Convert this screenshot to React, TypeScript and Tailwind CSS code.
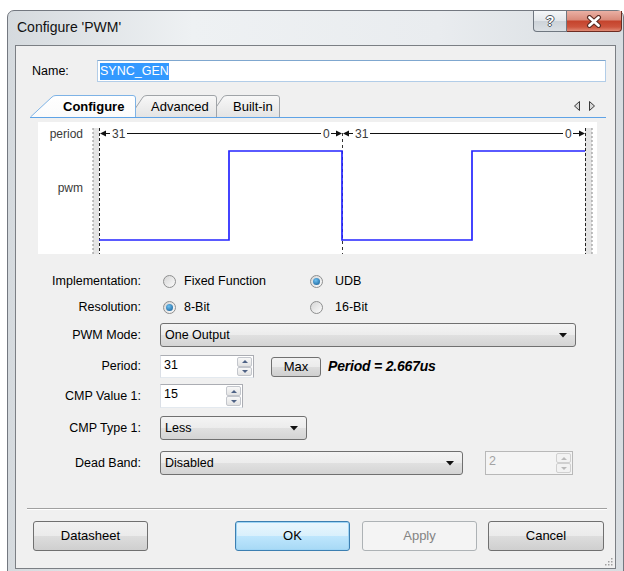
import React from "react";

// ---- small drawn glyphs ----

function DropArrow() {
  return (
    <svg width="8" height="5" viewBox="0 0 8 5">
      <polygon points="0,0 8,0 4,4.5" fill="#111" />
    </svg>
  );
}

function SpinHalf({ up, disabled }: { up?: boolean; disabled?: boolean }) {
  return (
    <div
      className={`flex-1 flex items-center justify-center rounded-[2px] border ${
        disabled
          ? "border-[#d0d0d0] bg-[#f2f2f2]"
          : "border-[#c3c6cc] bg-[linear-gradient(180deg,#f8f8f8,#e3e3e3)]"
      }`}
    >
      <svg width="6" height="3" viewBox="0 0 6 3">
        <polygon
          points={up ? "0,3 3,0 6,3" : "0,0 6,0 3,3"}
          fill={disabled ? "#b9b9b9" : "#4e6285"}
        />
      </svg>
    </div>
  );
}

// ---- controls ----

function SpinBox({
  value,
  className,
  disabled,
}: {
  value: string;
  className: string;
  disabled?: boolean;
}) {
  return (
    <div
      className={`flex items-stretch border ${
        disabled
          ? "border-[#b8b8b8] bg-[#f4f4f4] text-[#a3a3a3]"
          : "border-[#abadb3] border-l-[#dbdfe6] border-b-[#e3e9ef] bg-white"
      } ${className}`}
    >
      <span className="flex-1 pl-[3px] pt-[1px] leading-[16px]">{value}</span>
      <div className="w-[17px] flex flex-col p-[1px]">
        <SpinHalf up disabled={disabled} />
        <SpinHalf disabled={disabled} />
      </div>
    </div>
  );
}

function Combo({ value, className }: { value: string; className: string }) {
  return (
    <div
      className={`flex items-center justify-between h-full pl-[4px] pr-[8px] rounded-[3px] border border-[#707070] bg-[linear-gradient(180deg,#f4f4f4_0%,#ececec_50%,#e0e0e0_51%,#d4d4d4_100%)] ${className}`}
    >
      <span>{value}</span>
      <DropArrow />
    </div>
  );
}

function Radio({
  label,
  checked,
  gap,
}: {
  label: string;
  checked?: boolean;
  gap: string;
}) {
  return (
    <div className="flex items-center">
      <span className="w-[13px] h-[13px] rounded-full border border-[#8e8f8f] bg-[linear-gradient(135deg,#d6d6d6,#fbfbfb)] flex items-center justify-center">
        {checked && (
          <span className="w-[7px] h-[7px] rounded-full bg-[radial-gradient(circle_at_40%_35%,#6cc0f2,#13588f)]" />
        )}
      </span>
      <span className={gap}>{label}</span>
    </div>
  );
}

function WinButton({
  label,
  kind,
  className,
}: {
  label: string;
  kind?: "default" | "disabled";
  className: string;
}) {
  const look =
    kind === "default"
      ? "border-[#3c7fb1] bg-[linear-gradient(180deg,#eaf6fd_0%,#d9f0fc_50%,#bee6fd_51%,#a7d9f5_100%)] shadow-[inset_0_0_0_1px_#9fd5f5]"
      : kind === "disabled"
      ? "border-[#adb2b5] bg-[#f4f4f4] text-[#838383]"
      : "border-[#707070] bg-[linear-gradient(180deg,#f2f2f2_0%,#ebebeb_50%,#dddddd_51%,#cfcfcf_100%)]";
  return (
    <div
      className={`h-full flex items-center justify-center rounded-[3px] border text-[13px] ${look} ${className}`}
    >
      {label}
    </div>
  );
}

function FieldRow({
  label,
  className,
  children,
}: {
  label: string;
  className: string;
  children: React.ReactNode;
}) {
  return (
    <div className={`flex items-center ${className}`}>
      <span className="w-[125px] shrink-0 text-right">{label}</span>
      {children}
    </div>
  );
}

// ---- tabs ----

function tabPath(w: number, slant: number) {
  return `M0.5,22 L${slant},2 Q${slant + 1.5},0.5 ${slant + 4},0.5 H${w - 3} Q${w - 0.5},0.5 ${w - 0.5},3 V22`;
}

function Tab({
  label,
  width,
  active,
  className,
  pad,
}: {
  label: string;
  width: number;
  active?: boolean;
  className: string;
  pad: string;
}) {
  const id = `tab-${label}`;
  return (
    <div className={`relative h-[22px] shrink-0 ${className}`}>
      <svg className="absolute inset-0" width={width} height="23" viewBox={`0 0 ${width} 23`}>
        <defs>
          <linearGradient id={id} x1="0" y1="0" x2="0" y2="1">
            <stop offset="0" stopColor={active ? "#ffffff" : "#f8f8f8"} />
            <stop offset="1" stopColor={active ? "#fbfbfb" : "#e4e4e4"} />
          </linearGradient>
        </defs>
        <path
          d={tabPath(width, active ? 22 : 14)}
          fill={`url(#${id})`}
          stroke={active ? "#7eb3e6" : "#a0a4a8"}
          strokeWidth="1"
        />
      </svg>
      <span
        className={`relative flex items-center h-full pt-[2px] text-[13px] ${pad} ${
          active ? "font-bold" : ""
        }`}
      >
        {label}
      </span>
    </div>
  );
}

// ---- timing diagram ----

function Waveform() {
  const txt = { fontSize: 12, fill: "#3a3a3a" };
  return (
    <svg width="559" height="132" viewBox="0 0 559 132" className="block">
      <text x="45" y="16" textAnchor="end" style={txt}>period</text>
      <text x="45" y="70" textAnchor="end" style={txt}>pwm</text>

      {/* start / end markers */}
      <rect x="55" y="6" width="6" height="126" fill="#e4e4e4" />
      <line x1="55" y1="6" x2="55" y2="132" stroke="#8a8a8a" strokeDasharray="2 2" />
      <line x1="61.5" y1="6" x2="61.5" y2="132" stroke="#222" strokeDasharray="3 2" />
      <rect x="547" y="6" width="7" height="126" fill="#e4e4e4" />
      <line x1="547.5" y1="6" x2="547.5" y2="132" stroke="#222" strokeDasharray="3 2" />
      <line x1="554" y1="6" x2="554" y2="132" stroke="#8a8a8a" strokeDasharray="2 2" />
      <line x1="304.5" y1="11" x2="304.5" y2="132" stroke="#333" strokeDasharray="3 3" />

      {/* period counter, first cycle */}
      <polygon points="62,11.5 68,8.5 68,14.5" fill="#111" />
      <line x1="68" y1="11.5" x2="72" y2="11.5" stroke="#111" />
      <text x="74" y="16" style={txt}>31</text>
      <line x1="89" y1="11.5" x2="283" y2="11.5" stroke="#111" />
      <text x="285" y="16" style={txt}>0</text>
      <line x1="293" y1="11.5" x2="298" y2="11.5" stroke="#111" />
      <polygon points="304,11.5 298,8.5 298,14.5" fill="#111" />

      {/* second cycle */}
      <polygon points="305,11.5 311,8.5 311,14.5" fill="#111" />
      <line x1="311" y1="11.5" x2="315" y2="11.5" stroke="#111" />
      <text x="317" y="16" style={txt}>31</text>
      <line x1="332" y1="11.5" x2="525" y2="11.5" stroke="#111" />
      <text x="527" y="16" style={txt}>0</text>
      <line x1="535" y1="11.5" x2="541" y2="11.5" stroke="#111" />
      <polygon points="547,11.5 541,8.5 541,14.5" fill="#111" />

      <path
        d="M61,118 H191 V29 H304 V118 H434 V29 H547"
        fill="none"
        stroke="#2525ff"
        strokeWidth="1.7"
      />
    </svg>
  );
}

// ---- dialog ----

export default function App() {
  return (
    <div className="w-[624px] h-[571px] overflow-hidden bg-white font-['Liberation_Sans',Arial,sans-serif] text-[12.5px] text-black">
      <div className="mt-[10px] ml-[7px] w-[617px] h-[563px] flex flex-col rounded-t-[7px] border border-[#737880] bg-[linear-gradient(90deg,#d5dade,#eef1f3_30%,#e9ecef_70%,#d8dde1)]">
        {/* caption */}
        <div className="h-[34px] flex justify-between shrink-0">
          <span className="ml-[9px] mt-[8px] text-[14px] leading-[16px] text-[#111]">
            Configure 'PWM'
          </span>
          <div className="flex h-[21px] mr-[1px]">
            <div className="w-[34px] flex items-center justify-center rounded-bl-[4px] border border-t-0 border-[#6f7780] bg-[linear-gradient(180deg,#f5f7f9,#e2e6ea_50%,#cdd3d9_51%,#dbe0e4)]">
              <span className="text-[14px] font-bold leading-none text-white [text-shadow:-1px_0_#505860,1px_0_#505860,0_-1px_#505860,0_1px_#505860]">
                ?
              </span>
            </div>
            <div className="w-[55px] flex items-center justify-center rounded-br-[4px] border border-l-0 border-t-0 border-[#6d2c22] bg-[linear-gradient(180deg,#eab0a4,#d98a7a_45%,#c4432c_50%,#cd553e_80%,#e08a74)]">
              <svg width="16" height="13" viewBox="0 0 16 13">
                <path d="M3.5,2.5 L12.5,10.5 M12.5,2.5 L3.5,10.5" stroke="#5a2a22" strokeWidth="5" strokeLinecap="round" />
                <path d="M3.5,2.5 L12.5,10.5 M12.5,2.5 L3.5,10.5" stroke="#fff" strokeWidth="2.8" strokeLinecap="round" />
              </svg>
            </div>
          </div>
        </div>

        {/* client area */}
        <div className="relative ml-[7px] w-[601px] h-[524px] shrink-0 border border-[#7b7f84] bg-[#f0f0f0]">
          <div className="flex items-center h-[22px] mt-[14px]">
            <span className="w-[81px] pl-[16px]">Name:</span>
            <div className="w-[509px] h-full flex items-center pl-[2px] border border-[#b2cde8] border-t-[#7fa7cf] bg-white">
              <span className="bg-[#3399ff] text-white leading-[17px]">SYNC_GEN</span>
            </div>
          </div>

          {/* tab strip */}
          <div className="relative mt-[13px] ml-[14px] w-[576px] h-[23px] flex items-start border-b border-[#5fa3e6]">
            <Tab label="Configure" width={106} active className="w-[106px] z-30" pad="pl-[33px]" />
            <Tab label="Advanced" width={88} className="w-[88px] -ml-[7px] z-20" pad="pl-[22px]" />
            <Tab label="Built-in" width={71} className="w-[71px] -ml-[8px] z-10" pad="pl-[24px]" />
            <div className="flex-1" />
            <div className="flex items-center gap-[9px] h-[22px] mr-[11px]">
              <svg width="6" height="10" viewBox="0 0 6 10">
                <polygon points="5.5,0.5 0.5,5 5.5,9.5" fill="#d8d8d8" stroke="#3a3a3a" />
              </svg>
              <svg width="6" height="10" viewBox="0 0 6 10">
                <polygon points="0.5,0.5 5.5,5 0.5,9.5" fill="#d8d8d8" stroke="#3a3a3a" />
              </svg>
            </div>
          </div>

          <div className="mt-[4px] ml-[22px] w-[559px] h-[132px] bg-white">
            <Waveform />
          </div>

          <FieldRow label="Implementation:" className="mt-[14px] h-[26px]">
            <div className="ml-[22px] w-[147px]">
              <Radio label="Fixed Function" gap="ml-[8px]" />
            </div>
            <Radio label="UDB" checked gap="ml-[12px]" />
          </FieldRow>
          <FieldRow label="Resolution:" className="h-[26px]">
            <div className="ml-[22px] w-[147px]">
              <Radio label="8-Bit" checked gap="ml-[8px]" />
            </div>
            <Radio label="16-Bit" gap="ml-[12px]" />
          </FieldRow>

          <FieldRow label="PWM Mode:" className="mt-[3px] h-[24px]">
            <Combo value="One Output" className="ml-[19px] w-[416px]" />
          </FieldRow>

          <FieldRow label="Period:" className="mt-[8px] h-[23px]">
            <SpinBox value="31" className="ml-[19px] w-[94px] h-full" />
            <WinButton label="Max" className="ml-[17px] w-[50px] !h-[20px]" />
            <span className="ml-[7px] text-[14px] font-bold italic tracking-[-0.2px]">Period = 2.667us</span>
          </FieldRow>

          <FieldRow label="CMP Value 1:" className="mt-[6px] h-[24px]">
            <SpinBox value="15" className="ml-[19px] w-[83px] h-full" />
          </FieldRow>

          <FieldRow label="CMP Type 1:" className="mt-[8px] h-[24px]">
            <Combo value="Less" className="ml-[19px] w-[147px]" />
          </FieldRow>

          <FieldRow label="Dead Band:" className="mt-[11px] h-[24px]">
            <Combo value="Disabled" className="ml-[19px] w-[303px]" />
            <SpinBox value="2" disabled className="ml-[22px] w-[88px] h-full" />
          </FieldRow>

          <div className="mt-[33px] ml-[11px] w-[580px] border-t border-b border-t-[#a0a0a0] border-b-white" />

          <div className="flex mt-[11px] h-[30px]">
            <WinButton label="Datasheet" className="ml-[17px] w-[115px]" />
            <WinButton label="OK" kind="default" className="ml-[87px] w-[115px]" />
            <WinButton label="Apply" kind="disabled" className="ml-[12px] w-[115px]" />
            <WinButton label="Cancel" className="ml-[11px] w-[116px]" />
          </div>

          {/* size grip */}
          <svg className="absolute right-[2px] bottom-[2px]" width="10" height="10" viewBox="0 0 10 10">
            {[
              [8, 2], [5, 5], [8, 5], [2, 8], [5, 8], [8, 8],
            ].map(([x, y]) => (
              <rect key={`${x}-${y}`} x={x} y={y} width="1.5" height="1.5" fill="#a0a0a0" />
            ))}
          </svg>
        </div>
      </div>
    </div>
  );
}
